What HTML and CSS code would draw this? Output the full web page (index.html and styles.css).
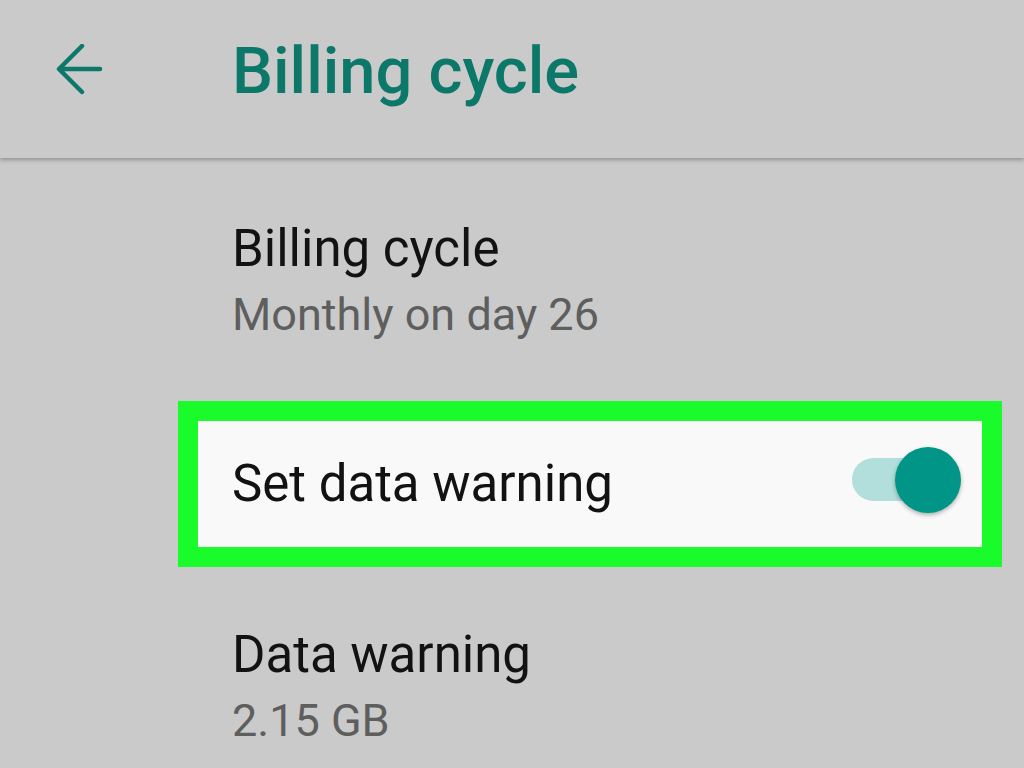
FILE: index.html
```html
<!DOCTYPE html>
<html>
<head>
<meta charset="utf-8">
<link rel="stylesheet" href="styles.css">
</head>
<body>
<header class="appbar">
  <div class="back">
    <svg width="50" height="56" viewBox="0 0 50 56">
      <path d="M45 25 H5 M27 2 L4 25 L27 48" fill="none" stroke="#0b786a" stroke-width="4.5" stroke-linecap="round" stroke-linejoin="round"/>
    </svg>
  </div>
  <h1 class="title">Billing cycle</h1>
</header>
<main class="list">
  <div class="item">
    <div class="item-title">Billing cycle</div>
    <div class="item-sub">Monthly on day 26</div>
  </div>
  <div class="highlight">
    <div class="switch-row">
      <div class="item-title">Set data warning</div>
      <div class="switch">
        <div class="track"></div>
        <div class="thumb"></div>
      </div>
    </div>
  </div>
  <div class="item item-last">
    <div class="item-title">Data warning</div>
    <div class="item-sub">2.15 GB</div>
  </div>
</main>
</body>
</html>
```
FILE: styles.css
```css
html, body {
  margin: 0;
  padding: 0;
  background: #cacaca;
  font-family: Roboto, "Liberation Sans", sans-serif;
  width: 1024px;
  height: 768px;
  overflow: hidden;
}
.appbar {
  height: 158px;
  background: #cacaca;
  box-shadow: 0 2px 4px rgba(0, 0, 0, 0.28);
  display: flex;
  align-items: flex-start;
  position: relative;
  z-index: 1;
}
.back {
  margin-left: 55px;
  margin-top: 44px;
  width: 50px;
  height: 56px;
}
.back svg {
  display: block;
}
.title {
  margin: 31px 0 0 127px;
  font-size: 65px;
  line-height: 80px;
  font-weight: 500;
  color: #0b786a;
}
.list {
  display: flex;
  flex-direction: column;
}
.item {
  padding-left: 232px;
  margin-top: 59px;
}
.item-title {
  font-size: 51px;
  line-height: 64px;
  color: #121212;
}
.item-sub {
  font-size: 45px;
  line-height: 68px;
  color: #5e5e5e;
}
.highlight {
  margin: 52px 0 0 178px;
  width: 784px;
  border: 20px solid #1afb2c;
  background: #f9f9f9;
}
.switch-row {
  height: 126px;
  display: flex;
  align-items: center;
  justify-content: space-between;
  padding: 0 21px 0 34px;
}
.switch {
  position: relative;
  width: 109px;
  height: 66px;
  margin-top: -8px;
}
.track {
  position: absolute;
  left: 0;
  top: 11px;
  width: 86px;
  height: 43px;
  border-radius: 22px;
  background: #b2dedb;
}
.thumb {
  position: absolute;
  right: 0;
  top: 0;
  width: 66px;
  height: 66px;
  border-radius: 50%;
  background: #009587;
  box-shadow: 0 2px 4px rgba(0, 0, 0, 0.3);
}
.item-last {
  margin-top: 56px;
}
```
